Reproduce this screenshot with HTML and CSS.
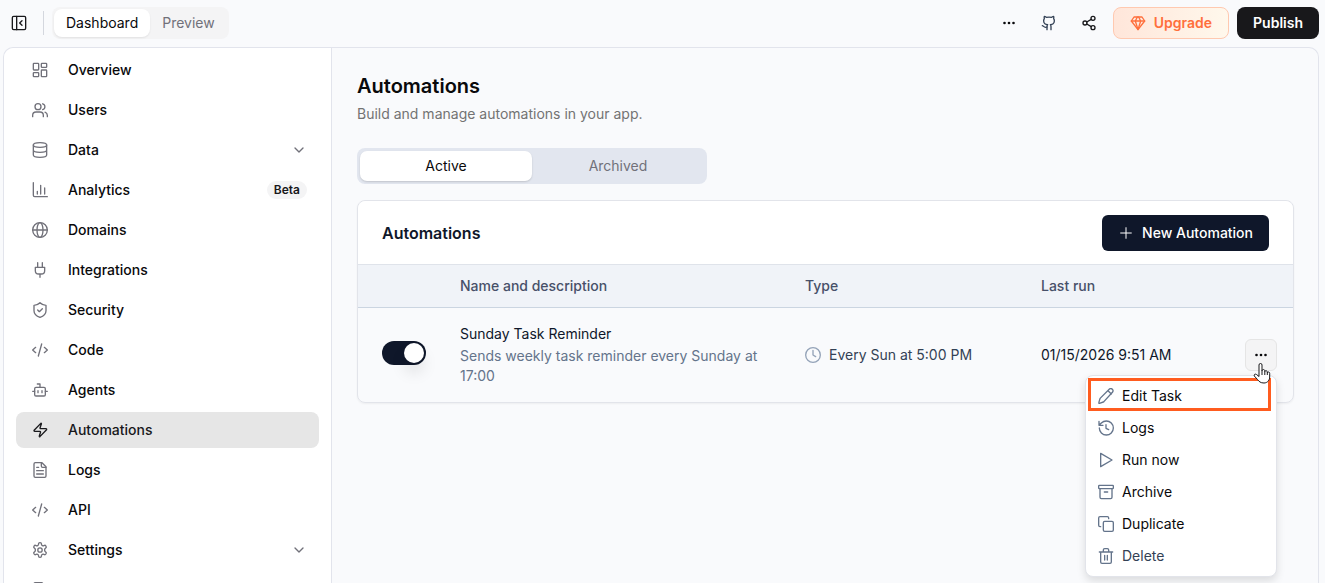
FILE: index.html
```html
<!DOCTYPE html>
<html lang="en">
<head>
  <meta charset="UTF-8" />
  <meta name="viewport" content="width=device-width, initial-scale=1.0" />
  <title>Automations</title>
  <link rel="stylesheet" href="styles.css">
</head>
<body>

<header class="topbar">
  <button class="icon-btn" aria-label="Collapse sidebar">
    <svg class="icon dark" viewBox="0 0 24 24"><rect x="2" y="2" width="20" height="20" rx="2"/><path d="M8.500 2v20M16.500 8.500 13 12l3.500 3.500"/></svg>
  </button>
  <span class="divider"></span>
  <div class="mode-tabs">
    <button class="mode-tab active">Dashboard</button>
    <button class="mode-tab">Preview</button>
  </div>

  <div class="topbar-actions">
    <button class="icon-btn" aria-label="More">
      <svg class="icon dots" viewBox="0 0 16 16"><circle cx="3.500" cy="8" r="1.300"/><circle cx="8" cy="8" r="1.300"/><circle cx="12.500" cy="8" r="1.300"/></svg>
    </button>
    <button class="icon-btn" aria-label="GitHub">
      <svg class="icon slate" viewBox="0 0 24 24"><path d="M15 22v-4a4.800 4.800 0 0 0-1-3.500c3 0 6-2 6-5.500.08-1.250-.27-2.480-1-3.500.28-1.150.28-2.350 0-3.500 0 0-1 0-3 1.500-2.640-.5-5.360-.5-8 0C6 2 5 2 5 2c-.3 1.150-.3 2.350 0 3.500A5.403 5.403 0 0 0 4 9c0 3.500 3 5.500 6 5.500-.39.490-.68 1.050-.85 1.650-.17.600-.22 1.230-.15 1.850v4"/><path d="M9 18c-4.510 2-5-2-7-2"/></svg>
    </button>
    <button class="icon-btn" aria-label="Share">
      <svg class="icon dark" viewBox="0 0 24 24"><circle cx="18" cy="5" r="3"/><circle cx="6" cy="12" r="3"/><circle cx="18" cy="19" r="3"/><path d="M8.600 13.500l6.800 4M15.400 6.500l-6.800 4"/></svg>
    </button>
    <button class="btn btn-upgrade">
      <svg class="icon" viewBox="0 0 24 24"><path d="M6 3h12l4 6-10 13L2 9Z"/><path d="M11 3 8 9l4 13 4-13-3-6M2 9h20"/></svg>
      Upgrade
    </button>
    <button class="btn btn-publish">Publish</button>
  </div>
</header>

<div class="panel">
  <!-- Sidebar -->
  <nav class="sidebar">
    <a class="nav-item" href="#">
      <svg class="icon" viewBox="0 0 24 24"><rect x="2" y="2" width="8" height="10" rx="1"/><rect x="14" y="2" width="8" height="6" rx="1"/><rect x="14" y="12" width="8" height="10" rx="1"/><rect x="2" y="16" width="8" height="6" rx="1"/></svg>
      <span>Overview</span>
    </a>
    <a class="nav-item" href="#">
      <svg class="icon" viewBox="0 0 24 24"><path d="M17 22v-2a5 5 0 0 0-5-5H6a5 5 0 0 0-5 5v2"/><circle cx="9" cy="7" r="4.500"/><path d="M23 22v-2a5 5 0 0 0-3.500-4.700M16 2.700a4.500 4.500 0 0 1 0 8.700"/></svg>
      <span>Users</span>
    </a>
    <a class="nav-item" href="#">
      <svg class="icon" viewBox="0 0 24 24"><ellipse cx="12" cy="4.500" rx="10" ry="3.500"/><path d="M2 4.500v15C2 21.500 6.500 23 12 23s10-1.500 10-3.500v-15M2 12c0 2 4.500 3.500 10 3.500S22 14 22 12"/></svg>
      <span>Data</span>
      <svg class="chevron" viewBox="0 0 24 24"><path d="m6 9 6 6 6-6"/></svg>
    </a>
    <a class="nav-item" href="#">
      <svg class="icon" viewBox="0 0 24 24"><path d="M2 1v19a2 2 0 0 0 2 2h19M8 18v-4M13 18V5M19 18V9"/></svg>
      <span>Analytics</span>
      <span class="badge">Beta</span>
    </a>
    <a class="nav-item" href="#">
      <svg class="icon" viewBox="0 0 24 24"><circle cx="12" cy="12" r="11"/><ellipse cx="12" cy="12" rx="4.500" ry="11"/><path d="M1 12h22"/></svg>
      <span>Domains</span>
    </a>
    <a class="nav-item" href="#">
      <svg class="icon" viewBox="0 0 24 24"><path d="M12 23v-5M8.500 8V1M15.500 8V1M5 8h14v5a5 5 0 0 1-5 5h-4a5 5 0 0 1-5-5Z"/></svg>
      <span>Integrations</span>
    </a>
    <a class="nav-item" href="#">
      <svg class="icon" viewBox="0 0 24 24"><path d="M21 13c0 5-3.500 8-9 10-5.500-2-9-5-9-10V5c3.500 0 6.500-1.500 9-4 2.500 2.500 5.500 4 9 4Z"/><path d="m8.500 12 2.500 2.500 4.500-4.500"/></svg>
      <span>Security</span>
    </a>
    <a class="nav-item" href="#">
      <svg class="icon" viewBox="0 0 24 24"><path d="m18.500 16 4.500-4-4.500-4M5.500 8 1 12l4.500 4M14.500 3l-5 18"/></svg>
      <span>Code</span>
    </a>
    <a class="nav-item" href="#">
      <svg class="icon" viewBox="0 0 24 24"><path d="M12 8V3H8M1 14h3M20 14h3M9 13v3M15 13v3"/><rect x="4" y="8" width="16" height="13" rx="2"/></svg>
      <span>Agents</span>
    </a>
    <a class="nav-item active" href="#">
      <svg class="icon" viewBox="0 0 24 24"><path d="M4 14a1 1 0 0 1-.8-1.600l10-10.300a.5.500 0 0 1 .9.500L12 8.900a1 1 0 0 0 1 1.100h8a1 1 0 0 1 .8 1.600l-10 10.300a.5.500 0 0 1-.9-.5l2-6.300A1 1 0 0 0 12 14Z"/></svg>
      <span>Automations</span>
    </a>
    <a class="nav-item" href="#">
      <svg class="icon" viewBox="0 0 24 24"><path d="M15 1H5a2 2 0 0 0-2 2v18a2 2 0 0 0 2 2h14a2 2 0 0 0 2-2V7Z"/><path d="M14 1v5a2 2 0 0 0 2 2h5M7 8h3M7 13h10M7 18h10"/></svg>
      <span>Logs</span>
    </a>
    <a class="nav-item" href="#">
      <svg class="icon" viewBox="0 0 24 24"><path d="m18.500 16 4.500-4-4.500-4M5.500 8 1 12l4.500 4M14.500 3l-5 18"/></svg>
      <span>API</span>
    </a>
    <a class="nav-item" href="#">
      <svg class="icon" viewBox="0 0 24 24"><path d="M12.200 1h-.4a2 2 0 0 0-2 2v.500a2 2 0 0 1-1 1.700l-.5.300a2 2 0 0 1-2 0l-.4-.2a2 2 0 0 0-2.700.7l-.3.500a2 2 0 0 0 .7 2.700l.4.300a2 2 0 0 1 1 1.700v1.600a2 2 0 0 1-1 1.700l-.4.300a2 2 0 0 0-.7 2.700l.3.500a2 2 0 0 0 2.700.7l.4-.2a2 2 0 0 1 2 0l.5.300a2 2 0 0 1 1 1.700v.500a2 2 0 0 0 2 2h.4a2 2 0 0 0 2-2v-.5a2 2 0 0 1 1-1.700l.5-.3a2 2 0 0 1 2 0l.4.200a2 2 0 0 0 2.700-.7l.3-.5a2 2 0 0 0-.7-2.700l-.4-.3a2 2 0 0 1-1-1.700v-1.600a2 2 0 0 1 1-1.700l.4-.3a2 2 0 0 0 .7-2.700l-.3-.5a2 2 0 0 0-2.700-.7l-.4.200a2 2 0 0 1-2 0l-.5-.3a2 2 0 0 1-1-1.700V3a2 2 0 0 0-2-2Z"/><circle cx="12" cy="12" r="3.300"/></svg>
      <span>Settings</span>
      <svg class="chevron" viewBox="0 0 24 24"><path d="m6 9 6 6 6-6"/></svg>
    </a>
    <a class="nav-item" href="#" aria-label="More">
      <svg class="icon" viewBox="0 0 24 24"><path d="M15 1H5a2 2 0 0 0-2 2v18a2 2 0 0 0 2 2h14a2 2 0 0 0 2-2V7Z"/></svg>
    </a>
  </nav>

  <!-- Page content -->
  <main class="content">
    <h1>Automations</h1>
    <p class="subtitle">Build and manage automations in your app.</p>

    <div class="filter-tabs">
      <button class="filter-tab active">Active</button>
      <button class="filter-tab">Archived</button>
    </div>

    <section class="card">
      <div class="card-header">
        <h2>Automations</h2>
        <button class="btn-new">
          <svg class="icon" viewBox="0 0 24 24"><path d="M12 4v16M4 12h16"/></svg>
          New Automation
        </button>
      </div>

      <table class="automations">
        <colgroup>
          <col class="col-toggle">
          <col class="col-name">
          <col class="col-type">
          <col class="col-run">
          <col class="col-menu">
        </colgroup>
        <thead>
          <tr>
            <th></th>
            <th>Name and description</th>
            <th>Type</th>
            <th>Last run</th>
            <th></th>
          </tr>
        </thead>
        <tbody>
          <tr>
            <td class="cell-toggle"><input class="toggle" type="checkbox" aria-label="Sunday Task Reminder" checked></td>
            <td>
              <p class="task-name">Sunday Task Reminder</p>
              <p class="task-desc">Sends weekly task reminder every Sunday at 17:00</p>
            </td>
            <td>
              <div class="task-type">
                <svg class="icon" viewBox="0 0 24 24"><circle cx="12" cy="12" r="11"/><path d="M12 5v7l4 2.500"/></svg>
                Every Sun at 5:00 PM
              </div>
            </td>
            <td>01/15/2026 9:51 AM</td>
            <td>
              <div class="menu-wrap">
                <button class="btn-more" aria-label="Task actions">
                  <svg class="icon dots" viewBox="0 0 16 16"><circle cx="3.500" cy="8" r="1.300"/><circle cx="8" cy="8" r="1.300"/><circle cx="12.500" cy="8" r="1.300"/></svg>
                </button>

                <!-- Dropdown menu -->
                <div class="menu">
                  <button class="menu-item highlighted">
                    <svg class="icon" viewBox="0 0 24 24"><path d="M22 6a3.400 3.400 0 0 0-4.800-4.600L3.500 15.200a2 2 0 0 0-.5.800L1.200 22a.7.700 0 0 0 .9.900L8 21a2 2 0 0 0 .8-.5ZM15 4l5 5"/></svg>
                    Edit Task
                  </button>
                  <button class="menu-item">
                    <svg class="icon" viewBox="0 0 24 24"><path d="M2 12A10.500 10.500 0 1 0 12.500 1.500 11 11 0 0 0 5 4.500L1.500 8M1.500 2v6h6M12 7v5.500l4 2"/></svg>
                    Logs
                  </button>
                  <button class="menu-item">
                    <svg class="icon" viewBox="0 0 24 24"><path d="M4 2v20l17-10Z"/></svg>
                    Run now
                  </button>
                  <button class="menu-item">
                    <svg class="icon" viewBox="0 0 24 24"><rect x="1" y="2" width="22" height="5" rx="1"/><path d="M3 7v13a2 2 0 0 0 2 2h14a2 2 0 0 0 2-2V7M9.500 12h5"/></svg>
                    Archive
                  </button>
                  <button class="menu-item">
                    <svg class="icon" viewBox="0 0 24 24"><rect x="8" y="8" width="15" height="15" rx="2"/><path d="M4 16H3a2 2 0 0 1-2-2V3a2 2 0 0 1 2-2h11a2 2 0 0 1 2 2v1"/></svg>
                    Duplicate
                  </button>
                  <button class="menu-item delete">
                    <svg class="icon" viewBox="0 0 24 24"><path d="M2 6h20M4 6v15a2 2 0 0 0 2 2h12a2 2 0 0 0 2-2V6M8 6V3a2 2 0 0 1 2-2h4a2 2 0 0 1 2 2v3M10 11v7M14 11v7"/></svg>
                    Delete
                  </button>
                </div>

                <svg class="pointer" viewBox="0 0 18 22"><path d="M6 12V3a1.500 1.500 0 0 1 3 0v6c0-2 2.800-2 2.800 0v.8c0-1.500 2.400-1.500 2.500.2v.8c.3-1.300 2.400-1 2.400.5V15c0 3-2.200 6-5.700 6-3.500 0-5-1.500-6.500-3.500L1.300 14c-.7-1.300.9-2.500 2.200-1.500L6 14.500Z"/><path d="M9 9v4M11.800 9.800V13M14.300 10.500V13"/></svg>
              </div>
            </td>
          </tr>
        </tbody>
      </table>
    </section>
  </main>
</div>

</body>
</html>
```
FILE: styles.css
```css
* {
  margin: 0;
  padding: 0;
  box-sizing: border-box;
}

body {
  height: 100vh;
  display: flex;
  flex-direction: column;
  overflow: hidden;
  background: #f9fafc;
  color: #09090b;
  font-family: Inter, sans-serif;
  font-size: 14px;
  line-height: 20px;
}

button {
  font: inherit;
  color: inherit;
  border: none;
  background: none;
  cursor: pointer;
}

.icon {
  width: 16px;
  height: 16px;
  flex-shrink: 0;
  fill: none;
  stroke: currentColor;
  stroke-width: 2;
  stroke-linecap: round;
  stroke-linejoin: round;
}

.icon.dots {
  fill: currentColor;
  stroke: none;
}

.icon.dark {
  color: #18181b;
}

.icon.slate {
  color: #334155;
}

/* Top bar */
.topbar {
  display: flex;
  align-items: center;
  padding: 7px 6px 8px 3px;
}

.icon-btn {
  width: 32px;
  height: 32px;
  display: flex;
  align-items: center;
  justify-content: center;
}

.divider {
  width: 1px;
  height: 24px;
  margin: 0 8px;
  background: #d4d7de;
}

.mode-tabs {
  display: flex;
  padding: 2px;
  background: #f4f4f5;
  border-radius: 8px;
}

.mode-tab {
  padding: 4px 12px;
  border-radius: 8px;
  color: #71717a;
}

.mode-tab.active {
  background: #fff;
  color: #09090b;
  box-shadow: 0 1px 2px rgba(0, 0, 0, 0.08);
}

.topbar-actions {
  margin-left: auto;
  display: flex;
  align-items: center;
  gap: 8px;
}

.btn {
  height: 32px;
  display: flex;
  align-items: center;
  gap: 8px;
  padding: 0 16px;
  border-radius: 8px;
  font-weight: 600;
}

.btn-upgrade {
  color: #ff6f3c;
  border: 1px solid #ffc9b0;
  background: linear-gradient(90deg, #ffe6da, #fff8ec);
}

.btn-publish {
  background: #18181b;
  color: #fff;
}

/* Main panel */
.panel {
  flex: 1;
  min-height: 0;
  display: flex;
  margin: 0 6px 0 3px;
  border: 1px solid #e2e4ec;
  border-bottom: none;
  border-radius: 10px 10px 0 0;
}

.sidebar {
  width: 328px;
  flex-shrink: 0;
  display: flex;
  flex-direction: column;
  gap: 4px;
  padding: 4px 12px 0;
  overflow: hidden;
  background: #fff;
  border-right: 1px solid #e2e4ec;
  border-radius: 10px 0 0 0;
}

.nav-item {
  height: 36px;
  flex-shrink: 0;
  display: flex;
  align-items: center;
  gap: 20px;
  padding: 0 12px 0 16px;
  border-radius: 8px;
  color: #09090b;
  font-weight: 500;
  text-decoration: none;
}

.nav-item .icon {
  color: #71717a;
}

.nav-item.active {
  background: #e6e6e6;
  color: #18181b;
}

.nav-item.active .icon {
  color: #18181b;
}

.chevron {
  width: 16px;
  height: 16px;
  margin-left: auto;
  fill: none;
  stroke: #71717a;
  stroke-width: 2;
  stroke-linecap: round;
  stroke-linejoin: round;
}

.badge {
  margin-left: auto;
  padding: 0 7px;
  border-radius: 10px;
  background: #f4f4f5;
  color: #18181b;
  font-size: 12px;
  font-weight: 600;
  line-height: 18px;
}

/* Content */
.content {
  flex: 1;
  min-width: 0;
  padding: 24px 24px 0 25px;
}

h1 {
  font-size: 20px;
  font-weight: 600;
  line-height: 28px;
}

.subtitle {
  margin-top: 4px;
  color: #737373;
}

.filter-tabs {
  max-width: 350px;
  display: flex;
  margin: 24px 0 16px;
  padding: 3px;
  background: #e2e6ef;
  border-radius: 8px;
}

.filter-tab {
  flex: 1;
  height: 30px;
  border-radius: 7px;
  color: #71717a;
}

.filter-tab.active {
  background: #fff;
  color: #09090b;
  box-shadow: 0 1px 2px rgba(0, 0, 0, 0.15);
}

.card {
  border: 1px solid #e2e4ea;
  border-radius: 8px;
  box-shadow: 0 1px 2px rgba(0, 0, 0, 0.05);
}

.card-header {
  display: flex;
  align-items: center;
  justify-content: space-between;
  padding: 14px 24px 13px;
  background: #fff;
  border-radius: 8px 8px 0 0;
}

.card-header h2 {
  color: #0f172a;
  font-size: 16px;
  font-weight: 600;
}

.btn-new {
  height: 36px;
  display: flex;
  align-items: center;
  gap: 8px;
  padding: 0 16px;
  border-radius: 6px;
  background: #0f172a;
  color: #fff;
  font-weight: 500;
}

.btn-new .icon {
  stroke-width: 1.5;
}

.automations {
  width: 100%;
  table-layout: fixed;
  border-collapse: collapse;
}

.col-toggle {
  width: 86px;
}

.col-type {
  width: 236px;
}

.col-run {
  width: 204px;
}

.col-menu {
  width: 64px;
}

.automations th {
  height: 43px;
  padding: 0 16px;
  background: #f0f3f8;
  border-top: 1px solid #dfe3ea;
  border-bottom: 1px solid #cbd5e1;
  color: #475069;
  font-weight: 500;
  text-align: left;
}

.automations td {
  height: 94px;
  padding: 16px;
  color: #0f172a;
}

.automations .cell-toggle {
  padding: 16px 16px 20px 24px;
}

.toggle {
  appearance: none;
  display: block;
  width: 44px;
  height: 24px;
  padding: 2px;
  border-radius: 12px;
  background: #0f172a;
  cursor: pointer;
}

.toggle::before {
  content: "";
  display: block;
  width: 20px;
  height: 20px;
  border-radius: 50%;
  background: #fff;
  box-shadow: 0 10px 15px rgba(0, 0, 0, 0.1);
}

.toggle:checked::before {
  margin-left: auto;
}

.task-name {
  margin-bottom: 2px;
}

.task-desc {
  color: #64748b;
}

.task-type {
  display: flex;
  align-items: center;
  gap: 8px;
  color: #334155;
}

.task-type .icon {
  color: #94a3b8;
}

/* Row menu */
.menu-wrap {
  position: relative;
}

.btn-more {
  width: 32px;
  height: 32px;
  display: flex;
  align-items: center;
  justify-content: center;
  border: 1px solid #e5e5e5;
  border-radius: 6px;
  background: #f4f4f5;
  color: #09090b;
}

.menu {
  position: absolute;
  top: 36px;
  right: 0;
  width: 192px;
  padding: 4px;
  background: #fff;
  border: 1px solid #e2e4ea;
  border-radius: 8px;
  box-shadow: 0 4px 8px rgba(0, 0, 0, 0.12);
}

.menu-item {
  position: relative;
  width: 100%;
  height: 32px;
  display: flex;
  align-items: center;
  gap: 8px;
  padding: 0 8px;
  color: #09090b;
}

.menu-item .icon {
  color: #64748b;
}

.menu-item.delete {
  color: #334155;
}

.menu-item.highlighted::after {
  content: "";
  position: absolute;
  inset: -2px 1px 1px -2px;
  border: 3px solid #ff5c1f;
}

.pointer {
  position: absolute;
  top: 23px;
  left: 8px;
  width: 18px;
  height: 22px;
  fill: #fff;
  stroke: #18181b;
  stroke-width: 1;
  stroke-linejoin: round;
}
```
